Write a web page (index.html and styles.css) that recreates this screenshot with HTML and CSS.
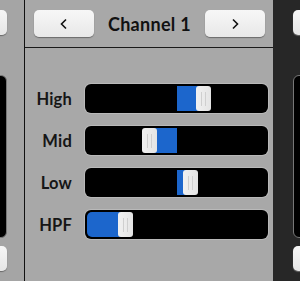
FILE: index.html
```html
<!DOCTYPE html>
<html lang="en">
<head>
    <meta charset="UTF-8">
    <meta name="viewport" content="width=device-width, initial-scale=1.0">
    <title>Channel EQ</title>
    <link rel="stylesheet" href="styles.css">
</head>
<body>
    <div class="mixer">
        <div class="side side-left">
            <div class="side-button"></div>
            <div class="side-panel"></div>
            <div class="side-button"></div>
        </div>

        <div class="strip">
            <div class="header">
                <button class="nav-button">
                    <svg width="10" height="12" viewBox="0 0 10 12"><polyline points="7,1.5 2.5,6 7,10.5" fill="none" stroke="#111" stroke-width="1.6"/></svg>
                </button>
                <div class="title">Channel 1</div>
                <button class="nav-button">
                    <svg width="10" height="12" viewBox="0 0 10 12"><polyline points="3,1.5 7.5,6 3,10.5" fill="none" stroke="#111" stroke-width="1.6"/></svg>
                </button>
            </div>

            <div class="controls">
                <div class="label">High</div>
                <div class="track">
                    <div class="fill" style="left: 92px; width: 26px"></div>
                    <div class="thumb" style="left: 111px"><span></span><span></span></div>
                </div>

                <div class="label">Mid</div>
                <div class="track">
                    <div class="fill" style="left: 64px; width: 28px"></div>
                    <div class="thumb" style="left: 57px"><span></span><span></span></div>
                </div>

                <div class="label">Low</div>
                <div class="track">
                    <div class="fill" style="left: 92px; width: 12px"></div>
                    <div class="thumb" style="left: 98px"><span></span><span></span></div>
                </div>

                <div class="label">HPF</div>
                <div class="track">
                    <div class="fill fill-start" style="left: 2px; width: 38px"></div>
                    <div class="thumb" style="left: 33px"><span></span><span></span></div>
                </div>
            </div>
        </div>

        <div class="side side-right">
            <div class="side-button"></div>
            <div class="side-panel"></div>
            <div class="side-button"></div>
        </div>
    </div>
</body>
</html>
```

FILE: styles.css
```css
body {
    margin: 0;
    background-color: #a7a7a7;
    font-family: Lato, "Open Sans", sans-serif;
}

.mixer {
    display: flex;
    width: 300px;
    height: 281px;
    overflow: hidden;
}

.side {
    display: flex;
    flex-direction: column;
    flex-shrink: 0;
    overflow: hidden;
}

.side-left {
    width: 24px;
    background: #a5a5a5;
    border-right: 1px solid #111;
    align-items: flex-end;
}

.side-right {
    width: 27px;
    background: #272727;
    align-items: flex-start;
    padding-left: 20px;
    box-sizing: border-box;
}

.side-left .side-button,
.side-left .side-panel {
    margin-right: 17px;
}

.side-button {
    width: 60px;
    height: 25px;
    margin-top: 10px;
    flex-shrink: 0;
    background: linear-gradient(#f6f6f6, #e6e6e6);
    border-radius: 5px;
    box-shadow: 0 1px 1px #6a6a6a;
}

.side-panel {
    width: 60px;
    height: 161px;
    margin-top: 40px;
    flex-shrink: 0;
    background: #000;
    border: 1px solid #777;
    border-radius: 6px;
}

.side .side-panel + .side-button {
    margin-top: 8px;
}

.strip {
    width: 248px;
    flex-shrink: 0;
    background: #a8a8a8;
}

.header {
    display: flex;
    align-items: center;
    justify-content: space-between;
    height: 47px;
    padding: 0 8px 0 9px;
    border-bottom: 1px solid #1a1a1a;
}

.nav-button {
    display: flex;
    align-items: center;
    justify-content: center;
    width: 60px;
    height: 27px;
    padding: 0;
    border: none;
    border-radius: 5px;
    background: linear-gradient(#f7f7f7, #e8e8e8);
    box-shadow: 0 1px 1px #6a6a6a;
}

.title {
    font-size: 18px;
    font-weight: 700;
    color: #111;
    letter-spacing: 0.3px;
}

.controls {
    display: grid;
    grid-template-columns: 47px 183px;
    grid-auto-rows: 29px;
    column-gap: 13px;
    row-gap: 13px;
    padding-top: 36px;
}

.label {
    display: flex;
    align-items: center;
    justify-content: flex-end;
    font-size: 16.5px;
    font-weight: 700;
    color: #161616;
    letter-spacing: 0.2px;
}

.track {
    position: relative;
    background: #000;
    border-radius: 6px;
    box-shadow: 0 0 0 1px #b9b9b9;
}

.fill {
    position: absolute;
    top: 2px;
    bottom: 2px;
    background: #1c66cc;
}

.fill-start {
    border-radius: 5px 0 0 5px;
}

.thumb {
    position: absolute;
    top: 2px;
    bottom: 2px;
    width: 15px;
    display: flex;
    justify-content: center;
    gap: 3px;
    padding-top: 6px;
    padding-bottom: 5px;
    box-sizing: border-box;
    background: linear-gradient(90deg, #f1f1f1, #e4e4e4);
    border-radius: 3px;
}

.thumb span {
    width: 1px;
    background: #cfcfcf;
}
```
